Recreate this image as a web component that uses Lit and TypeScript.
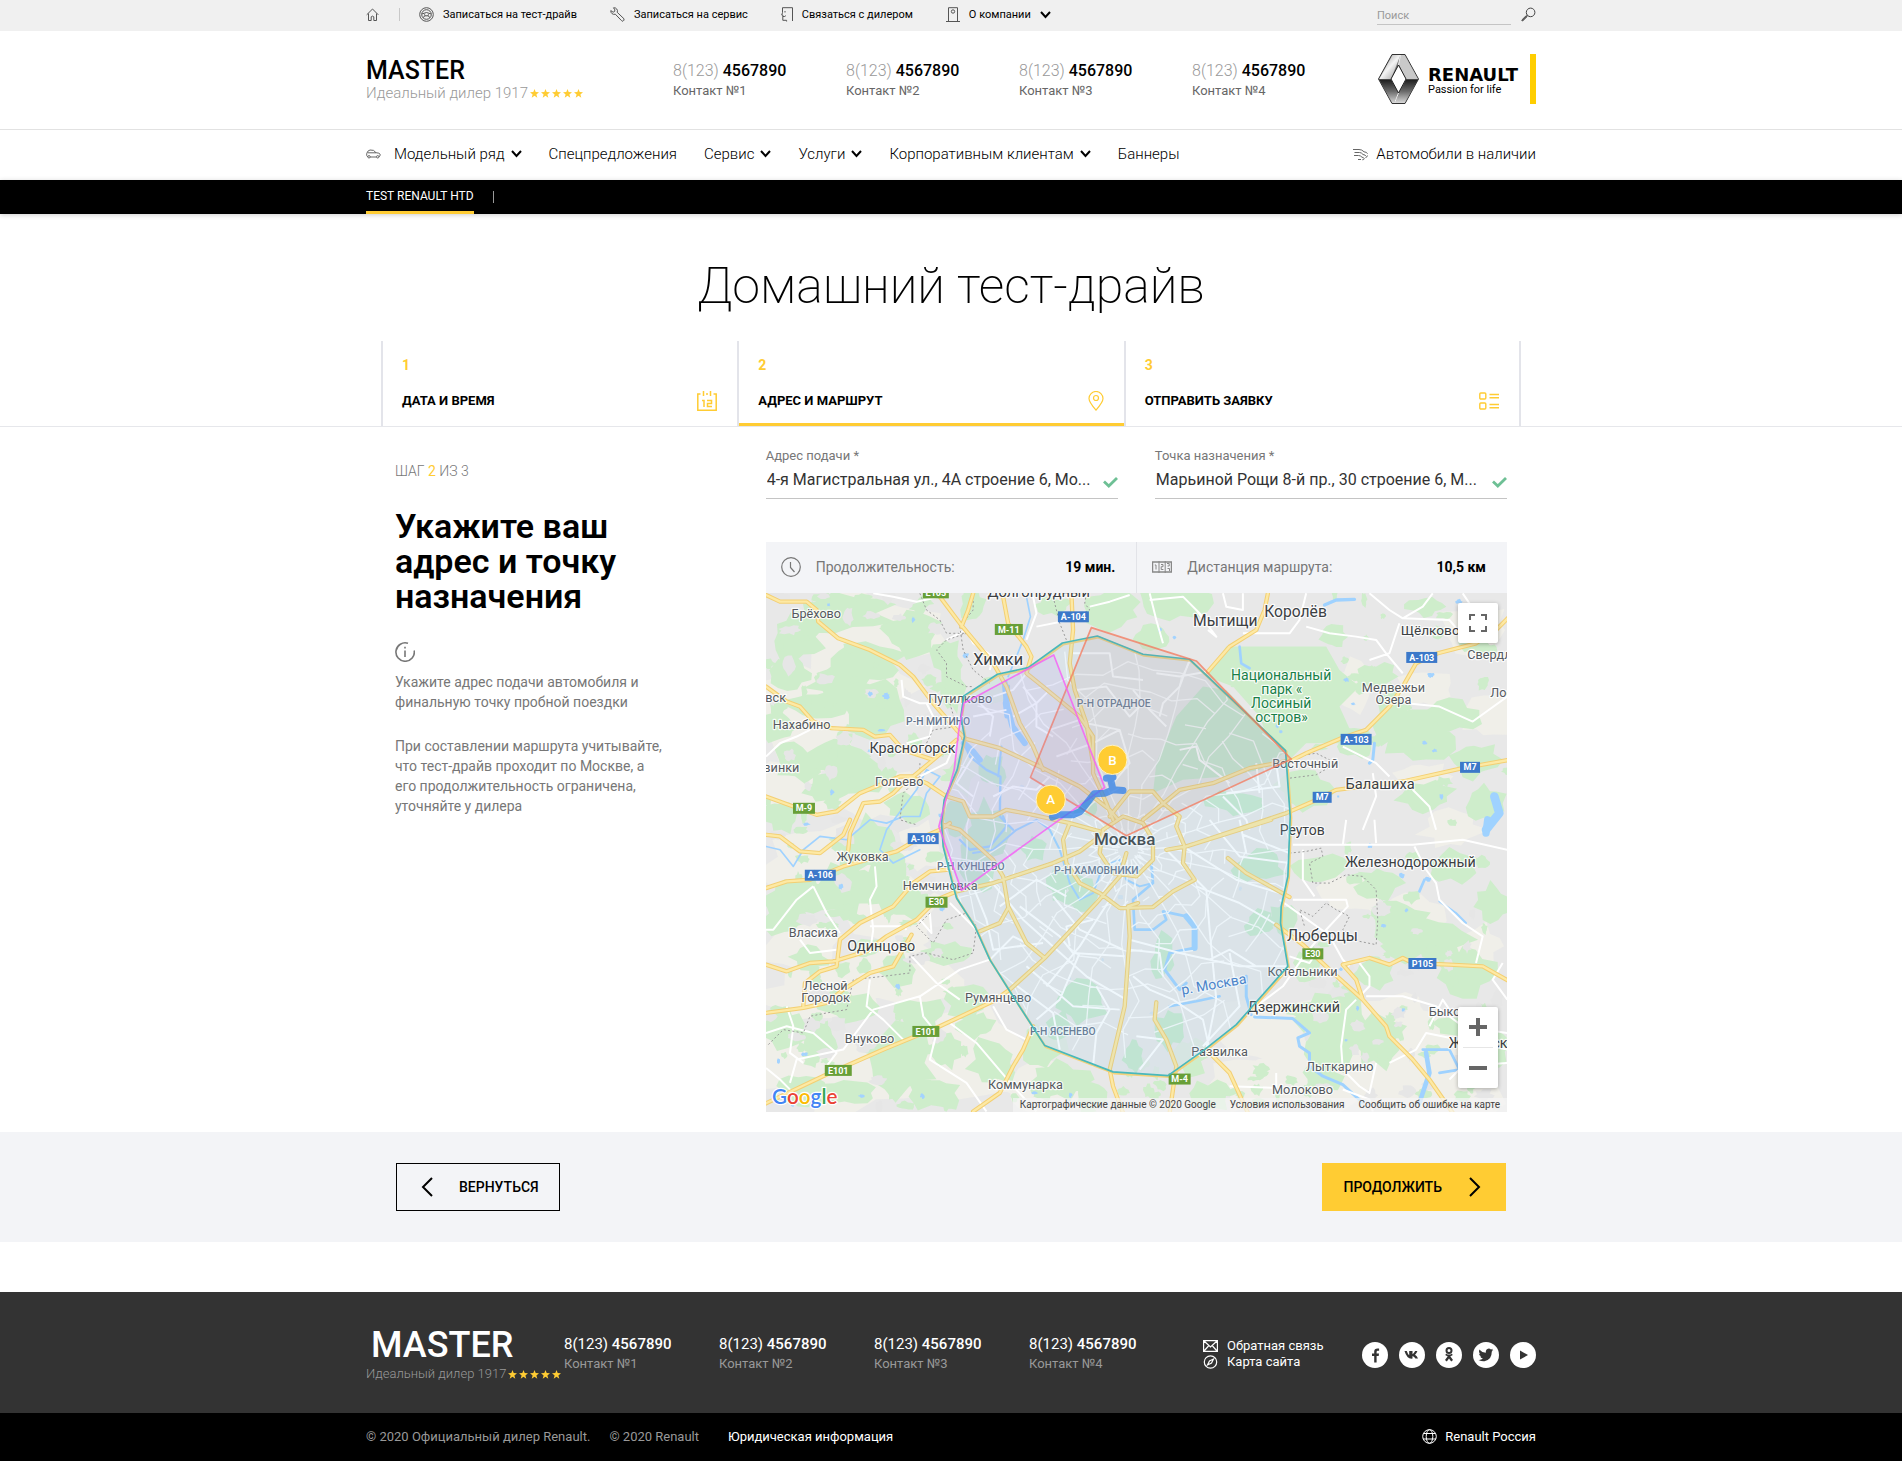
import { LitElement, html, svg, css } from "lit";
import { customElement } from "lit/decorators.js";

/* ---------- map data (units: one third of a CSS pixel) ---------- */

type P = [number, number];
const pts = (s: string, dx = 0, dy = 0): P[] =>
  s.trim().split(/\s+/).map((p) => {
    const [x, y] = p.split(",").map(Number);
    return [x + dx, y + dy] as P;
  });
const line = (p: P[]) => "M" + p.map((q) => q.join(" ")).join("L");
const E = 1110;
const S = 870;

function rng(seed: number) {
  let s = seed * 7919 + 17;
  return () => {
    s = (s * 1103515245 + 12345) % 2147483648;
    return s / 2147483648;
  };
}

/* jagged patch of land around a centre */
function patch(x: number, y: number, rx: number, ry: number): string {
  const r = rng(x + y * 3 + rx);
  const n = 15;
  let d = "";
  for (let i = 0; i < n; i++) {
    const a = (i / n) * Math.PI * 2;
    const k = 0.62 + r() * 0.55;
    d += (i ? "L" : "M") + Math.round(x + Math.cos(a) * rx * k) + " " + Math.round(y + Math.sin(a) * ry * k);
  }
  return d + "Z";
}
const patches = (list: number[][]) => list.map(([x, y, a, b]) => patch(x, y, a, b)).join("");

const scatter = (seed: number, n: number, x0: number, y0: number, w: number, h: number, lo: number, hi: number) => {
  const r = rng(seed);
  let d = "";
  for (let i = 0; i < n; i++) {
    const x = Math.round(x0 + r() * w);
    const y = Math.round(y0 + r() * h);
    d += patch(x, y, Math.round(lo + r() * (hi - lo)), Math.round(lo + r() * (hi - lo) * 0.8));
  }
  return d;
};

const sand = patches([
  [300, 300, 260, 120], [120, 560, 150, 200], [330, 470, 150, 140], [100, 780, 130, 90], [330, 800, 160, 90],
  [200, 1000, 210, 130], [400, 1150, 150, 110], [120, 1250, 130, 80], [420, 1350, 200, 100], [180, 1400, 190, 80],
  [620, 1560, 200, 150], [300, 1640, 240, 110], [850, 1680, 160, 80], [80, 1560, 110, 120], [480, 950, 80, 80],
  [1560, 1500, 180, 120], [1750, 1620, 230, 140], [1500, 1660, 170, 100], [2000, 1560, 150, 120], [2080, 1690, 200, 90],
  [1900, 1450, 110, 60], [2150, 300, 120, 80], [2000, 480, 100, 60], [2180, 560, 90, 70], [1780, 480, 80, 90],
  [2080, 900, 100, 60], [1770, 1090, 90, 70], [1950, 1150, 120, 60], [2150, 1250, 90, 70], [1990, 740, 90, 50],
]);

const woods = patches([
  [240, 250, 170, 60], [450, 310, 90, 70], [330, 400, 110, 60], [110, 320, 90, 80], [560, 380, 50, 60], [240, 460, 100, 60],
  [90, 430, 70, 50], [180, 520, 100, 40], [340, 540, 110, 90], [60, 590, 60, 50], [230, 680, 90, 60], [110, 700, 70, 60],
  [300, 740, 80, 60], [70, 860, 60, 50], [200, 780, 80, 50], [440, 830, 70, 50], [610, 730, 40, 70], [580, 470, 40, 90],
  [700, 480, 60, 40], [640, 230, 40, 50], [880, 230, 60, 30], [1060, 240, 90, 60], [1240, 220, 110, 60], [1180, 320, 60, 40],
  [330, 950, 110, 90], [120, 1090, 120, 60], [260, 1080, 90, 90], [380, 1050, 60, 110], [80, 1160, 80, 60], [440, 1110, 70, 60],
  [560, 1270, 90, 40], [410, 1320, 60, 50], [330, 1250, 60, 30], [150, 1290, 60, 40], [60, 1500, 80, 60], [260, 1430, 90, 50],
  [480, 1460, 80, 60], [620, 1420, 70, 60], [180, 1530, 60, 60], [420, 1600, 110, 110], [560, 1560, 50, 60], [520, 1690, 90, 60],
  [700, 1600, 80, 80], [260, 1690, 90, 40], [120, 1680, 70, 50], [840, 1560, 80, 70], [900, 1650, 90, 60], [1000, 1700, 60, 40],
  [650, 1490, 60, 40], [1290, 1580, 60, 60], [1350, 1700, 70, 50], [1720, 1500, 110, 130], [1850, 1530, 90, 90],
  [1690, 1640, 60, 50], [1620, 1440, 60, 30], [1920, 1180, 90, 70], [2010, 1230, 130, 80], [2120, 1330, 90, 70],
  [1860, 1060, 70, 50], [1690, 1020, 90, 50], [2080, 1010, 80, 50], [2200, 1120, 60, 60], [1970, 620, 120, 90],
  [2080, 560, 90, 50], [1900, 560, 60, 90], [2150, 690, 80, 60], [1790, 640, 60, 50], [2000, 800, 90, 50], [2180, 820, 60, 60],
  [1850, 440, 70, 40], [2000, 230, 60, 30], [2140, 330, 60, 50], [1720, 320, 40, 40], [1640, 780, 90, 60], [2110, 1490, 90, 40],
  [2200, 1550, 60, 60], [1840, 1330, 60, 50], [1640, 1310, 40, 50], [1470, 430, 60, 60],
]) + "M1340 440L1400 350L1560 350L1700 350L1740 420L1800 470L1740 530L1790 640L1640 640L1560 720L1500 560L1420 470Z";

const elkPark = "M1330 470L1400 480L1580 665L1500 720L1400 740L1270 750L1180 790L1190 700L1250 560Z";

const cityWoods = patches([
  [960, 1420, 80, 70], [900, 1490, 40, 50], [960, 1090, 50, 50], [680, 900, 70, 90], [650, 1000, 60, 90], [590, 860, 40, 60],
  [1430, 820, 90, 40], [1500, 1010, 80, 50], [1210, 1280, 40, 70], [1230, 1500, 50, 60], [900, 1060, 40, 60],
  [980, 830, 40, 30], [1500, 1180, 50, 40], [700, 720, 40, 50], [1120, 1580, 30, 50], [1570, 1170, 40, 60], [820, 960, 40, 40],
]) + elkPark;

const ponds = scatter(41, 55, 30, 200, 2200, 1530, 4, 11);
const greenBits = scatter(12, 110, 20, 190, 600, 1560, 8, 32) + scatter(27, 55, 1650, 190, 600, 1560, 8, 28) + scatter(8, 22, 700, 1600, 950, 140, 8, 28);
const greyBits = scatter(91, 50, 20, 190, 560, 1560, 10, 36) + scatter(92, 35, 1640, 1100, 600, 640, 8, 30);

const ring = pts(
  "1013,318 908,339 805,413 713,433 612,498 603,560 614,620 592,720 553,810 545,880 550,950 575,1050 590,1105 645,1190 690,1290 750,1385 855,1548 1060,1627 1225,1638 1335,1560 1430,1485 1585,1310 1563,1180 1565,1130 1585,1040 1592,860 1578,662 1290,388 1150,373",
);
const west = pts("882,375 612,520 597,600 583,720 555,820 537,890 605,1082 860,898 1035,773");
const north = pts("995,293 812,743 1100,918 1595,688 1310,393 1220,365");

const highways: P[][] = [
  pts("18,195 60,215 140,215 170,240 175,275 235,325 330,360 420,405 460,440 520,520 590,600 615,625"),
  pts("18,470 80,515 120,530 160,575 215,595 310,600 345,620 390,615 430,660 520,690 590,630"),
  pts("610,625 720,655 850,715 900,740 960,770 1050,840 1075,870"),
  pts("18,800 100,830 170,855 230,845 300,790 360,765 420,740 460,740 520,690"),
  pts("265,960 270,910 310,820 360,815 400,790 450,740 500,760 560,800 610,815 630,860 700,860 740,840 820,855 930,880 1020,905"),
  pts("540,200 600,280 700,400 740,470 780,580 820,650 850,720"),
  pts("730,200 745,280 800,350 815,380 800,430 850,470 960,560 1000,620 1000,730 1040,820 1060,870"),
  pts("640,190 625,240 605,290"),
  pts("935,190 940,300 930,400 945,480 980,580 1000,700"),
  pts("415,190 405,240 380,300 300,350 235,425", E),
  pts("1140,260 1100,300 1040,340 925,370 860,400 820,470 780,530 710,600 635,625 530,670 490,690 360,715 250,760 150,780 90,830 40,870", E),
  pts("1140,690 1000,715 820,755 620,780 550,815 470,850 320,900 170,950 110,960", E),
  pts("18,45 60,50 120,95 180,100 250,45 270,0", 0, S),
  pts("18,205 80,185 150,180 250,140 410,95 470,60 540,30 570,10", 0, S),
  pts("550,15 600,30 700,120 730,170 745,260 800,370 855,415", 0, S),
  pts("560,150 510,155 460,190 400,260 300,310 240,360 230,440 180,455 135,490 130,560", 0, S),
  pts("590,215 530,240 470,300 380,350 320,395 220,425 150,430 80,455 18,435", 0, S),
  pts("455,345 400,440 330,460 250,510 200,550 130,565 18,580", 0, S),
  pts("590,215 700,190 880,130 960,95 1020,50", 0, S),
  pts("10,855 200,765 370,690 540,620 700,545 750,510 855,415 1010,250 1080,170 1100,100", 0, S),
  pts("640,876 720,820 760,740 790,690 820,620", 0, S),
  pts("1135,250 1105,260 1110,350 1095,560 1050,750 1060,800 1090,880", 0, S),
  pts("660,335 720,310 745,265", 0, S),
  pts("295,115 350,160 480,232", E, S),
  pts("425,0 170,80", E, S),
  pts("440,315 520,375 600,450 700,540 770,620 780,650 850,720 900,780 970,880", E, S),
  pts("640,435 720,415 780,435 820,415 850,430 960,435 1060,440 1140,485", E, S),
  pts("640,435 680,480 700,540", E, S),
  pts("80,548 75,600 110,660 140,740 120,880", E, S),
  pts("230,690 300,760 355,880", E, S),
  pts("930,880 910,930 920,1000 960,1060 1020,1090 1080,1135 1180,1132 1240,1085 1305,1050 1270,1000 1275,950 1250,890 1260,860 1210,820 1180,785 1110,785 1050,860"),
  pts("1030,900 1020,970 1060,1030 1130,1040 1180,990 1180,930 1150,880 1090,860 1030,900"),
];

const roads: P[][] = [
  pts("340,190 400,200 470,215 540,200"), pts("820,200 830,250 800,330"), pts("830,290 930,270"), pts("990,230 1050,215 1110,195"),
  pts("18,680 60,640 110,620 150,600"), pts("425,450 430,500 480,520 520,520"), pts("440,640 510,620 520,560 500,520"),
  pts("590,630 560,700 480,740"), pts("620,300 640,340 700,380 690,420"), pts("560,330 620,300"), pts("700,500 760,480 800,430"),
  pts("660,520 700,560 690,620"), pts("640,560 740,540"), pts("790,470 830,520 830,590 880,620"), pts("760,560 830,520 870,480"),
  pts("700,800 760,770 830,780 870,740"), pts("940,370 1050,370 1060,440 1150,450"), pts("950,480 1040,470 1110,560 1150,520"),
  pts("980,580 1080,600 1110,700 1060,760"), pts("870,600 960,570"), pts("890,680 1000,640 1080,600"), pts("640,680 590,760 640,800"),
  pts("100,340 80,270 60,190", E), pts("60,210 160,200 230,270 200,240 260,320 235,300", E), pts("235,425 150,440 80,430", E),
  pts("280,190 290,230 340,240 340,190", E), pts("340,310 480,310 510,270 530,190", E), pts("530,290 600,310 680,320 740,330 770,370 820,430", E),
  pts("810,280 780,370 720,390", E), pts("720,190 780,240 820,265 880,230 910,190", E), pts("1000,190 1040,250 1040,300", E),
  pts("820,265 960,270 1020,340", E), pts("830,520 930,530 1030,575 1134,500", E), pts("640,650 700,680 740,700 780,740", E),
  pts("700,900 740,800 730,730", E), pts("850,780 900,830 920,900", E), pts("10,480 60,540 110,590", E), pts("180,390 150,470 100,520 90,560", E),
  pts("150,660 200,650 210,690 300,760", E), pts("280,800 350,870 360,900", E), pts("290,790 450,770 440,700", E), pts("380,700 390,790", E),
  pts("490,75 640,75 850,75 1000,60 1134,90", E, S), pts("640,75 650,0", E, S), pts("740,70 735,0", E, S), pts("855,80 890,150 920,190 930,240 1000,310 1060,350 1040,430", E, S),
  pts("490,240 650,240 655,260 590,330 530,400 460,500 380,560", E, S), pts("590,330 640,420 660,440", E, S), pts("450,240 520,290 590,340", E, S),
  pts("340,45 480,100", E, S), pts("520,90 520,180 555,230", E, S), pts("680,540 650,570 635,680 640,750 690,800 720,820 740,730", E, S),
  pts("710,530 820,530 920,560 1000,620 1134,640", E, S), pts("780,730 860,690 890,640 1134,690", E, S), pts("640,810 720,840 730,876", E, S),
  pts("300,800 440,805 440,760", E, S), pts("690,430 720,470 720,500 690,530", E, S), pts("1120,430 1090,480 1134,540", E, S),
  pts("960,780 1000,740 1134,730", E, S), pts("480,410 540,430 560,400", E, S), pts("900,620 940,540 960,570", E, S),
  pts("160,200 110,240 40,330 18,330", 0, S), pts("345,140 350,200 330,240 340,330 330,400", 0, S), pts("120,360 150,400 230,390", 0, S),
  pts("18,640 80,620 160,640 230,700 200,740", 0, S), pts("330,480 320,560 370,600 430,660", 0, S), pts("340,570 480,530 600,450 690,420", 0, S),
  pts("455,410 530,490 600,540", 0, S), pts("340,570 250,690 110,720 90,790", 0, S), pts("480,530 490,590 530,640 510,720 620,790 680,876", 0, S),
  pts("570,610 650,670 760,800 830,876", 0, S), pts("18,745 60,780 100,820", 0, S), pts("700,560 740,630 800,660", 0, S), pts("80,560 100,620 90,700 130,730", 0, S),
  pts("570,250 620,300 660,340", 0, S), pts("510,280 515,340 480,300", 0, S), pts("240,340 200,280 160,200", 0, S), pts("330,320 430,320 440,330", 0, S),
  pts("690,420 760,350 800,370", 0, S), pts("780,260 900,350 940,400 1095,410", 0, S), pts("690,180 790,300 980,470 1100,540", 0, S),
  pts("800,440 940,560 1080,570", 0, S), pts("640,200 680,300 700,390 850,370", 0, S), pts("880,230 960,330 1090,390", 0, S),
  pts("860,500 960,380 1050,240", 0, S), pts("830,600 900,540 960,400", 0, S), pts("1000,740 1010,640 1050,570 1010,500", 0, S),
  pts("760,490 880,580 900,690", 0, S), pts("720,260 830,180 920,230", 0, S), pts("930,380 920,320 1000,300", 0, S),
  pts("1110,390 1200,400 1210,470", 0, S), pts("110,90 230,210 240,330 260,540 230,690", E, S), pts("0,360 150,400 330,440 470,440", E, S),
  pts("20,650 100,660 30,750", E, S), pts("10,470 60,510 130,540 220,600 240,690", E, S), pts("200,200 330,250 450,320", E, S), pts("160,80 320,180 450,220", E, S),
  pts("300,400 330,560 220,680", E, S), pts("240,0 330,110 480,130", E, S), pts("240,420 300,390 380,440", E, S), pts("330,0 350,100", E, S),
];

/* city streets: spokes and rings around the centre */
const streets = (() => {
  const r = rng(5);
  const cx = 1105;
  const cy = 960;
  const out: string[] = [];
  const n = 24;
  for (let i = 0; i < n; i++) {
    const a = (i / n) * Math.PI * 2;
    let d = "";
    for (let k = 0; k < 8; k++) {
      const rad = 30 + k * 85;
      const b = a + (r() - 0.5) * 0.16;
      d += (k ? "L" : "M") + Math.round(cx + Math.cos(b) * rad) + " " + Math.round(cy + Math.sin(b) * rad);
    }
    out.push(d);
  }
  for (let q = 0; q < 9; q++) {
    let d = "";
    let pen = false;
    for (let i = 0; i <= 44; i++) {
      const a = (i / 44) * Math.PI * 2;
      const rad = 50 + q * 62 + (r() - 0.5) * 46;
      const p = Math.round(cx + Math.cos(a) * rad) + " " + Math.round(cy + Math.sin(a) * rad);
      if (r() < 0.2) pen = false;
      d += (pen ? "L" : "M") + p;
      pen = true;
    }
    out.push(d);
  }
  return out.join("");
})();

const rivers: [P[], number][] = [
  [pts("735,460 742,530 758,590 795,640"), 18],
  [pts("745,470 735,520 740,560"), 12],
  [pts("800,200 812,260 790,330 770,380 745,440"), 5],
  [pts("612,640 630,680 680,720 722,740 720,860 760,900"), 7],
  [pts("612,640 640,665 660,690"), 18],
  [pts("725,650 715,740"), 6],
  [pts("18,950 60,960 100,1010 130,960 180,920 260,930 330,870 380,880 430,860 480,860 500,790 540,740 500,720 470,780 380,900 360,960 400,1000 480,960"), 5],
  [pts("600,930 630,960 690,950 740,890 730,860"), 7],
  [pts("640,970 700,960 770,900 830,870 870,900 900,960 930,1060 960,1110 1000,1090 1030,1010 1080,990 1100,1050 1140,1070 1180,1060"), 6],
  [pts("65,130 70,190 10,240 15,330 70,330 110,300 100,275 170,290", E, S), 8],
  [pts("170,290 195,320 195,385", E, S), 18],
  [pts("195,385 120,400 105,450 150,510 170,490", E, S), 9],
  [pts("350,470 350,530 365,585", E, S), 9],
  [pts("375,592 490,597 540,640 505,655 510,680 540,700 540,740 580,770 640,795 700,850", E, S), 9],
  [pts("120,560 200,545 270,530", E, S), 8],
  [pts("930,245 980,280 1010,310", E, S), 6],
  [pts("880,690 960,690 990,750 930,760", E, S), 8],
  [pts("890,700 900,760 870,850", E, S), 14],
  [pts("1075,0 1070,40", E, S), 22],
  [pts("1095,800 1110,850 1070,900", E), 26],
  [pts("585,225 620,210 675,208", E), 10],
  [pts("330,350 335,400 360,415", E), 8],
  [pts("735,640 730,690 720,700", E), 9],
  [pts("885,180 870,215", E, S), 8],
];

const borders: P[][] = [
  pts("480,190 500,240 540,270 560,310 620,310 560,330 530,360 560,400 560,440 620,470 640,470"),
  pts("880,200 900,280 920,330"), pts("980,190 975,220 990,240 930,270"), pts("640,200 640,240 600,290 610,360 640,420 690,460"),
  pts("480,700 480,740 430,790 420,870 470,885"), pts("570,520 590,590 520,600 500,640"),
  pts("510,280 470,320 520,370 560,300 620,280 650,320 640,400 580,420 500,400 450,410 450,460 370,470 280,480 260,570 200,580 150,590 130,640 70,630 20,680", 0, S),
  pts("480,100 530,95 575,85 580,110 540,130 550,190 600,190 650,165 700,170 740,210 745,300 740,375 690,365 640,330 660,290 620,270 590,250 550,290 510,270 525,320", E, S),
  pts("480,700 500,680 560,670 620,700 560,735 480,745", E),
];

interface Label { x: number; y: number; t: string; s: number; c?: string; a?: string; w?: number; r?: number }
const INK = "#3c4043";
const MINOR = "#55595e";
const AREA = "#64748b";
const PARK = "#188048";
const town = (x: number, y: number, t: string, a = "middle"): Label => ({ x, y, t, s: 38, c: MINOR, a });
const city = (x: number, y: number, t: string, s = 43, a = "middle"): Label => ({ x, y, t, s, c: INK, a });
const area = (x: number, y: number, t: string): Label => ({ x, y, t, s: 31, c: AREA, w: 500 });
const park = (x: number, y: number, t: string): Label => ({ x, y, t, s: 42, c: PARK });

const labels: Label[] = [
  city(837, 200, "Долгопрудный", 44), town(169, 264, "Брёхово"), city(715, 405, "Химки", 49), town(78, 516, "овск", "end"),
  town(125, 598, "Нахабино"), town(601, 520, "Путилково"), area(535, 584, "Р-Н МИТИНО"), city(458, 669, "Красногорск"),
  town(118, 726, "винки", "end"), town(418, 769, "Гольево"), area(1062, 532, "Р-Н ОТРАДНОЕ"),
  city(E + 287, 287, "Мытищи", 47), city(E + 498, 260, "Королёв", 47), city(E + 814, 315, "Щёлково", 41, "start"),
  town(E + 1014, 388, "Свердл", "start"), town(E + 1083, 501, "Лос", "start"), town(E + 792, 486, "Медвежьи"), town(E + 792, 522, "Озера"),
  park(E + 455, 450, "Национальный"), park(E + 457, 492, "парк «"), park(E + 455, 534, "Лосиный"), park(E + 456, 576, "остров»"),
  town(E + 527, 714, "Восточный"), city(E + 752, 778, "Балашиха", 44),
  town(308, S + 123, "Жуковка"), area(633, S + 151, "Р-Н КУНЦЕВО"), town(541, S + 210, "Немчиновка"), town(160, S + 351, "Власиха"),
  city(364, S + 393, "Одинцово"), town(197, S + 510, "Лесной"), town(197, S + 546, "Городок"), town(715, S + 546, "Румянцево"),
  town(329, S + 669, "Внуково"), area(909, S + 646, "Р-Н ЯСЕНЕВО"), town(797, S + 808, "Коммунарка"), area(1010, S + 164, "Р-Н ХАМОВНИКИ"),
  { x: 1095, y: S + 75, t: "Москва", s: 51, c: INK, w: 500 },
  { x: E + 255, y: S + 508, t: "р. Москва", s: 42, c: "#3f78c4", r: -10 },
  city(E + 518, S + 46, "Реутов", 42), city(E + 843, S + 143, "Железнодорожный", 43), city(E + 579, S + 365, "Люберцы", 47),
  town(E + 519, S + 468, "Котельники"), city(E + 492, S + 577, "Дзержинский"), town(E + 898, S + 588, "Быко", "start"),
  city(E + 958, S + 684, "Жуковский", 43, "start"), town(E + 270, S + 708, "Развилка"), town(E + 631, S + 753, "Лыткарино"), town(E + 519, S + 822, "Молоково"),
];

const G = "#689f38";
const B = "#3b78c9";
const shields: [number, number, number, string, string][] = [
  [528, 188, 78, "E105", G], [747, 298, 84, "М-11", G], [941, 260, 93, "А-104", B], [132, 835, 66, "М-9", G],
  [E + 877, 382, 93, "А-103", B], [E + 680, 628, 93, "А-103", B], [E + 1022, 712, 60, "М7", B], [E + 578, 802, 57, "М7", B],
  [490, S + 56, 93, "А-106", B], [181, S + 166, 93, "А-106", B], [530, S + 247, 66, "E30", G], [498, S + 635, 81, "E101", G],
  [235, S + 752, 81, "E101", G], [E + 550, S + 402, 63, "E30", G], [E + 879, S + 431, 84, "Р105", B], [E + 150, S + 778, 66, "М-4", G],
];

@customElement("city-map")
class CityMap extends LitElement {
  static styles = css`
    :host { display: block; position: relative; font-family: Roboto, "Liberation Sans", sans-serif; }
    svg.canvas { display: block; width: 100%; height: auto; background: #e8e8e8; }
    .ctl { position: absolute; right: 9px; background: #fff; border-radius: 2px; box-shadow: 0 1px 4px rgba(0, 0, 0, 0.3); }
    .ctl.full { top: 10px; }
    .ctl.zoom { bottom: 24px; display: flex; flex-direction: column; }
    .ctl button { display: grid; place-items: center; width: 40px; height: 40px; padding: 0; border: 0; background: none; }
    .ctl hr { width: 30px; margin: 0 auto; border: 0; border-top: 1px solid #e6e6e6; }
    .terms { position: absolute; right: 0; bottom: 0; display: flex; height: 14px; background: rgba(245, 245, 245, 0.7); font-size: 10px; line-height: 14px; color: #444; white-space: nowrap; }
    .terms > * { padding: 0 7px; color: #444; text-decoration: none; }
  `;

  render() {
    const hw = highways.map(line).join("");
    const loop = line(ring) + "Z";
    return html`
      <svg class="canvas" viewBox="18 189 2226 1557" role="img" aria-label="Карта">
        <defs><clipPath id="inner"><path d=${loop}></path></clipPath></defs>
        <g>
          <path d=${sand} fill="#f0efe9"></path>
          <path d=${woods} fill="#ceedcb"></path>
          <path d=${greenBits} fill="#ceedcb"></path>
          <path d=${greyBits} fill="#e6e6e6"></path>
          <path d=${ponds} fill="#a3d3ff"></path>
          <path d=${loop} fill="#e8e8e8" opacity=".75"></path>
          <path d=${cityWoods} fill="#c9e9ce"></path>
        </g>
        <g fill="none" stroke="#9fd2ff" stroke-linejoin="round" stroke-linecap="round">
          ${rivers.map(([p, w]) => svg`<path d=${line(p)} stroke-width=${w}></path>`)}
        </g>
        <g fill="none" stroke="#fff" stroke-linejoin="round">
          <path d=${streets} stroke-width="4" clip-path="url(#inner)" opacity=".85"></path>
          <path d=${roads.map(line).join("")} stroke-width="6"></path>
        </g>
        <g fill="none" stroke="#9a9a9a" stroke-width="3" stroke-dasharray="6 7">
          <path d=${borders.map(line).join("")}></path>
        </g>
        <g fill="none" stroke-linejoin="round" stroke-linecap="round">
          <path d=${hw} stroke="#f3cf73" stroke-width="13"></path>
          <path d=${hw} stroke="#fde9a4" stroke-width="7"></path>
          <path d=${loop} stroke="#f3d27c" stroke-width="7" transform="translate(3 4)"></path>
        </g>
        <g font-family="Roboto, 'Liberation Sans', sans-serif" stroke="#fff" stroke-opacity=".85" stroke-width="7" stroke-linejoin="round" paint-order="stroke">
          ${labels.map((l) => svg`<text x=${l.x} y=${l.y} font-size=${l.s} fill=${l.c ?? INK} font-weight=${l.w ?? 400}
            text-anchor=${l.a ?? "middle"} transform=${l.r ? `rotate(${l.r} ${l.x} ${l.y})` : "rotate(0)"}>${l.t}</text>`)}
        </g>
        <g font-family="Roboto, 'Liberation Sans', sans-serif" font-size="27" font-weight="700" text-anchor="middle">
          ${shields.map(([x, y, w, t, c]) => svg`<rect x=${x - w / 2} y=${y - 16} width=${w} height="33" fill=${c}></rect><text x=${x} y=${y + 10} fill="#fff">${t}</text>`)}
        </g>
        <g stroke-linejoin="round" stroke-width="5">
          <path d=${loop} fill="#8fc8ea" fill-opacity=".14" stroke="#48b8bb"></path>
          <path d=${line(north) + "Z"} fill="#b98a8a" fill-opacity=".12" stroke="#f4775a" stroke-opacity=".75"></path>
          <path d=${line(west) + "Z"} fill="#b98af0" fill-opacity=".12" stroke="#f65cf6" stroke-opacity=".8"></path>
        </g>
        <g fill="none" stroke="#2a7de8" stroke-opacity=".72" stroke-width="21" stroke-linejoin="round" stroke-linecap="round">
          <path d="M878 862L895 855L940 855L962 845L1003 792L1035 790L1060 780L1090 782M1040 745L1060 742M1052 745L1060 780"></path>
        </g>
        <g font-family="Roboto, 'Liberation Sans', sans-serif" font-size="40" font-weight="500" text-anchor="middle">
          <circle cx="873" cy="810" r="44" fill="#fc3" stroke="#fff3c4" stroke-width="3"></circle>
          <text x="873" y="824" fill="#fff">A</text>
          <circle cx="1058" cy="690" r="44" fill="#fc3" stroke="#fff3c4" stroke-width="3"></circle>
          <text x="1058" y="704" fill="#fff">B</text>
        </g>
        <text x="36" y="1724" font-family="Lato, Roboto, sans-serif" font-size="62" stroke="#fff" stroke-width="7" paint-order="stroke" font-weight="600"
          ><tspan fill="#4285f4">G</tspan><tspan fill="#ea4335">o</tspan><tspan fill="#fbbc04">o</tspan><tspan fill="#4285f4">g</tspan><tspan fill="#34a853">l</tspan><tspan fill="#ea4335">e</tspan></text>
      </svg>
      <div class="ctl full">
        <button aria-label="Полный экран">
          <svg width="18" height="18" viewBox="0 0 18 18" fill="#666"><path d="M0 0h6v2H2v4H0zM12 0h6v6h-2V2h-4zM0 12h2v4h4v2H0zM16 12h2v6h-6v-2h4z"></path></svg>
        </button>
      </div>
      <div class="ctl zoom">
        <button aria-label="Увеличить"><svg width="18" height="18" fill="#666"><path d="M7 0h4v7h7v4h-7v7H7v-7H0V7h7z"></path></svg></button>
        <hr />
        <button aria-label="Уменьшить"><svg width="18" height="18" fill="#666"><path d="M0 7h18v4H0z"></path></svg></button>
      </div>
      <div class="terms">
        <span>Картографические данные © 2020 Google</span>
        <a href="#terms">Условия использования</a>
        <a href="#report">Сообщить об ошибке на карте</a>
      </div>
    `;
  }
}

/* ---------- icons ---------- */

const chevron = html`<svg class="chev" width="11" height="8" viewBox="0 0 11 8" fill="none" stroke="currentColor" stroke-width="2"><path d="M1 1l4.500 5L10 1"></path></svg>`;
const star = svg`<path d="M4.500 0l1.200 3.100 3.300.200-2.600 2.100.900 3.300-2.800-1.900-2.800 1.900.900-3.300L0 3.300l3.300-.200z"></path>`;
const stars = html`<svg class="stars" width="54" height="9" viewBox="0 0 54 9" fill="#fc3" role="img" aria-label="5 из 5">
  ${[0, 11, 22, 33, 44].map((x) => svg`<g transform="translate(${x} 0)">${star}</g>`)}
</svg>`;
const ico = {
  home: html`<svg width="13" height="13" viewBox="0 0 13 13" fill="none" stroke="#555"><path d="M.7 6.800L6.500 1l5.800 5.800M2.500 5.500v7h2.700V8.800q1.300-1.400 2.600 0v3.700h2.700v-7"></path></svg>`,
  wheel: html`<svg width="15" height="15" viewBox="0 0 15 15" fill="none" stroke="#555"><circle cx="7.500" cy="7.500" r="6.800"></circle><circle cx="7.500" cy="7.500" r="4.800"></circle><path d="M2.800 7q4.700-3 9.400 0M4 10.500l2-1.700h3l2 1.700M6 8.800l-.500-1.500M9 8.800l.500-1.500"></path></svg>`,
  wrench: html`<svg width="15" height="15" viewBox="0 0 15 15" fill="none" stroke="#555"><path d="M3.500.800a3.300 3.300 0 0 1 3.700 4.500l6.800 6.500q.400 1.600-1 2.400-.900.100-1.500-.600L5.300 7.200A3.400 3.400 0 0 1 .8 3.600l2.300 1.600 1.500-.700.300-1.600z"></path></svg>`,
  face: html`<svg width="12" height="15" viewBox="0 0 12 15" fill="none" stroke="#555"><path d="M11.500 14V.7h-10v5L.7 8h1.100v1.500h1.700M1.800 9.500v3.800h3.800v1.200M4 4v1.500M4.500 8.500l-1 1.500"></path></svg>`,
  door: html`<svg width="14" height="15" viewBox="0 0 14 15" fill="none" stroke="#555"><path d="M0 14.500h14M2.500 14V.7h9V14"></path><circle cx="7" cy="4.500" r="1.700"></circle></svg>`,
  search: html`<svg width="15" height="15" viewBox="0 0 15 15" fill="none" stroke="#444"><circle cx="9.600" cy="5.400" r="4.300"></circle><path d="M6.500 8.300l-5.300 5.200M5.500 8.300l-4.800 4.800.900.900L6.500 9.200"></path></svg>`,
  car: html`<svg width="15" height="10" viewBox="0 0 15 10" fill="none" stroke="#666"><path d="M4 8H10.500M1.800 8Q.3 7 .7 4.500 1.500 1.500 4 1q4-.6 6 2.700 3.500.2 4.200 1.600Q14.500 7 13 7.700"></path><circle cx="3" cy="7.800" r="1.200"></circle><circle cx="11.700" cy="7.800" r="1.200"></circle><path d="M1.500 3.800H10"></path></svg>`,
  fleet: html`<svg width="15" height="13" viewBox="0 0 15 13" fill="none" stroke="#666"><path d="M0 1.500h6q3 0 5 2.300 3 .2 3.500 2M1.500 4.500h5q2 0 3.500 2 2.500.3 3 1.700M1 7.500h4.500q2 0 3.500 1.700 2 .3 2.300 1.600-.3 1-2 1M5 11.500h3M12.500 9.500q2-.5 2-2"></path></svg>`,
  calendar: html`<svg width="20" height="20" viewBox="0 0 20 20" fill="none" stroke="#fc3" stroke-width="1.500"><path d="M3.500 3H.8v16.200h18.400V3h-2.700M6.500 0v5M13.500 0v5M9 3h2M5 9.500h2V16M10 9.500h4.500v3H10.500v3h4.500"></path></svg>`,
  pin: html`<svg width="16" height="20" viewBox="0 0 16 20" fill="none" stroke="#fc3" stroke-width="1.200"><path d="M8 19.200Q1 11 1 7.500a7 7 0 0 1 14 0Q15 11 8 19.200z"></path><circle cx="8" cy="7" r="2.500"></circle></svg>`,
  list: html`<svg width="20" height="18" viewBox="0 0 20 18" fill="none" stroke="#fc3" stroke-width="1.400"><rect x=".8" y="1" width="6" height="6" rx="1"></rect><rect x=".8" y="11" width="6" height="6" rx="1"></rect><path d="M10.500 2.500H20M10.500 5.800H20M10.500 12.500H20M10.500 15.800H20"></path></svg>`,
  info: html`<svg width="20" height="20" viewBox="0 0 20 20" fill="none" stroke="#777" stroke-width="1.600"><path d="M13 1.300A9.200 9.200 0 1 0 19.200 8.500M10 8.500V15M10 4.800V6.500"></path></svg>`,
  clock: html`<svg width="20" height="20" viewBox="0 0 20 20" fill="none" stroke="#777" stroke-width="1.200"><circle cx="10" cy="10" r="9.300"></circle><path d="M9.500 5v5.500l4 4.500"></path></svg>`,
  counter: html`<svg width="20" height="12" viewBox="0 0 20 12" fill="none" stroke="#888"><path d="M.5 1h19v10H.5z" stroke-width="1.500"></path><path d="M7 0v12M13.200 0v12M2.800 4h1.200v4.500M9 3.500h2v2.200H9.200V8.500h2.200M15 2.500h2.200v2.500H15.500M15.500 7.500h2V10"></path></svg>`,
  tick: html`<svg class="tick" width="15" height="11" viewBox="0 0 15 11" fill="none" stroke="#6ec095" stroke-width="2.800"><path d="M1 4.500l4.800 4.500L14 1"></path></svg>`,
  mail: html`<svg width="15" height="12" viewBox="0 0 15 12" fill="none" stroke="#fff" stroke-width="1.200"><path d="M.6.6h13.800v10.800H.6zM1 1l6.500 6L14 1M1 11l4.500-5M14 11L9.500 6"></path></svg>`,
  compass: html`<svg width="15" height="14" viewBox="0 0 15 14" fill="none" stroke="#fff" stroke-width="1.200"><circle cx="7.500" cy="7" r="6.200"></circle><path d="M10.500 4L8.500 8 4.500 10 6.500 6z"></path></svg>`,
  globe: html`<svg width="15" height="15" viewBox="0 0 15 15" fill="none" stroke="#fff"><circle cx="7.500" cy="7.500" r="6.800"></circle><ellipse cx="7.500" cy="7.500" rx="3.300" ry="6.800"></ellipse><path d="M1.800 4.500h11.400M1 10h13"></path></svg>`,
};

const emblem = html`<svg width="41" height="50" viewBox="0 0 41 50" aria-hidden="true">
  <defs>
    <linearGradient id="up" x1="0" y1="0" x2="1" y2="1"><stop offset="0" stop-color="#8a8a8a"></stop><stop offset=".5" stop-color="#f4f4f4"></stop><stop offset="1" stop-color="#8f8f8f"></stop></linearGradient>
    <linearGradient id="dn" x1="0" y1="0" x2="0" y2="1"><stop offset="0" stop-color="#1c1c1c"></stop><stop offset=".5" stop-color="#6a6a6a"></stop><stop offset="1" stop-color="#d9d9d9"></stop></linearGradient>
  </defs>
  <path d="M14 .5h13L40.500 25 27 49.500H14L.5 25z" fill="#777" stroke="#333"></path>
  <path d="M14.500 1h8L13 25H1.200z" fill="url(#up)"></path>
  <path d="M22.500 1h4.200L40 25H28L20.500 10z" fill="#c9c9c9"></path>
  <path d="M1.200 25.500H13L20.500 39 16 49h-1.700z" fill="url(#dn)"></path>
  <path d="M28 25.500h12L26.700 49H16.500z" fill="url(#dn)"></path>
  <path d="M20.500 11L28 25l-7.500 14L13 25z" fill="#fff" stroke="#222" stroke-width="1"></path>
  <path d="M22.500 1l-2 10M16.500 49l4-10" stroke="#eee" stroke-width="1"></path>
</svg>`;

const socials = [
  { n: "Facebook", g: svg`<path d="M14.600 20.500V14h2.100l.300-2.500h-2.400V10q0-1.200 1.200-1.200h1.300V6.600q-4.900-.800-4.900 3V11.500H10V14h2.200v6.500z"></path>` },
  { n: "ВКонтакте", g: svg`<path d="M5.500 9h2.300q.9 3 2.400 4.200V9h3.300v3.300q1.200-.4 2.600-3.300h2.300q-.7 2.300-2.400 3.700 2 1.100 3 3.900h-2.600q-1-2-2.900-2.600v2.600Q8 17.500 5.500 9z"></path>` },
  { n: "Одноклассники", g: svg`<path fill-rule="evenodd" d="M13 5a3.500 3.500 0 1 1 0 7 3.500 3.500 0 0 1 0-7zm0 2a1.500 1.500 0 1 0 0 3 1.500 1.500 0 0 0 0-3zM9.200 13l1-1.300q2.800 1.800 5.600 0l1 1.300q-1.200 1-2.500 1.300l2.700 3.700-1.800 1.500L13 16.600l-2.200 2.900L9 18l2.700-3.700Q10.400 14 9.200 13z"></path>` },
  { n: "Twitter", g: svg`<path d="M6.300 7.500q2.700 3.200 6.500 3.300-.3-3.800 3-4.200 1.200 0 2.200.9l2-.8-1.200 1.700 1.500-.4-1.500 1.600q0 8.500-7.300 9.600-3.200.2-6-1.300 2.700.2 4.400-1.300-2.200-.3-2.800-2h1.200q-2.200-.8-2.400-3l1.300.3q-2-1.800-.9-4.400z"></path>` },
  { n: "YouTube", g: svg`<path d="M10 8.500l8 4.500-8 4.500z"></path>` },
];

const phones = [1, 2, 3, 4];

@customElement("app-root")
class AppRoot extends LitElement {
  static styles = css`
    :host { display: block; background: #fff; color: #000; font-family: Roboto, "Liberation Sans", sans-serif; font-size: 15px; }
    * { box-sizing: border-box; }
    a { color: inherit; text-decoration: none; }
    h1, h2, p { margin: 0; }
    svg { flex: none; }
    .wrap { display: flex; align-items: center; max-width: 1170px; margin: 0 auto; }

    .util { background: #f0f0f0; font-size: 11px; }
    .util .wrap { height: 31px; padding-bottom: 2px; }
    .util nav { display: flex; align-items: center; flex: 1; gap: 33px; }
    .util nav a { display: flex; align-items: center; gap: 9px; }
    .util .home { padding-right: 20px; margin-right: -14px; border-right: 1px solid #c8c8c8; }
    .search { display: flex; align-items: center; gap: 10px; }
    .search input { width: 134px; height: 19px; margin-top: 2px; padding: 0; border: 0; border-bottom: 1px solid #c4c4c4; background: none; font: inherit; }
    .search input::placeholder { color: #999; opacity: 1; }
    .search button { display: grid; padding: 0; border: 0; background: none; }

    .head .wrap { display: grid; grid-template-columns: 307fr repeat(4, 173fr) 171fr; height: 98px; }
    .name { font-size: 25px; line-height: 26px; font-weight: 500; }
    .tag { display: flex; align-items: center; gap: 2px; color: #999; line-height: 18px; font-weight: 300; white-space: nowrap; }
    .phone { display: block; font-size: 16px; line-height: 22px; font-weight: 300; color: #999; white-space: nowrap; }
    .phone b { font-weight: 500; color: #000; }
    .contact { font-size: 13px; line-height: 18px; color: #666; }
    .brand { display: flex; align-items: center; gap: 9px; height: 50px; margin: -2px 0 0 13px; border-right: 6px solid #ffce00; }
    .brand .word { display: grid; margin-top: 4px; }
    .brand strong { font: 700 18px/17px "DejaVu Sans", sans-serif; }
    .brand small { font-size: 11px; line-height: 13px; }

    .menu { border-top: 1px solid #e2e2e2; font-weight: 300; }
    .menu .wrap { height: 50px; padding-bottom: 2px; gap: 27px; }
    .menu a { display: flex; align-items: center; gap: 6px; white-space: nowrap; }
    .menu .models svg:first-child { margin-right: 7px; }
    .menu .stock { margin-left: auto; gap: 8px; }

    .strip { background: #000; box-shadow: 0 1px 5px rgba(0, 0, 0, 0.2); color: #fff; font-size: 12px; }
    .strip .wrap { height: 34px; align-items: stretch; }
    .strip a { border-bottom: 3px solid #fc3; line-height: 33px; }
    .strip i { width: 1px; height: 12px; margin: 11px 19px; background: #999; }

    h1 { padding: 41px 0 24px; font-size: 50px; line-height: 62px; font-weight: 200; text-align: center; }

    .steps { border-bottom: 1px solid #e6e7eb; }
    .steps ol { display: grid; grid-template-columns: 357fr 387fr 396fr; max-width: 1140px; margin: 0 auto; padding: 0; list-style: none; border-right: 2px solid #e3e4ea; }
    .steps li { display: grid; grid-template-columns: 1fr auto; align-content: start; row-gap: 16px; height: 85px; padding: 14px 20px 0 19px; border-left: 2px solid #e3e4ea; font-size: 13px; line-height: 20px; font-weight: 700; text-transform: uppercase; }
    .steps li.on { box-shadow: inset 0 -3px #fc3; }
    .steps em { grid-column: 1 / -1; font-style: normal; font-size: 14px; color: #fc3; }
    .steps svg { align-self: center; }

    main { display: grid; grid-template-columns: 1fr 2fr; max-width: 1112px; margin: 0 auto; padding-bottom: 20px; }
    .side { padding: 34px 100px 0 0; color: #777; font-size: 14px; line-height: 20px; }
    .stepno { font-weight: 300; }
    .stepno b { font-weight: 400; color: #fc3; }
    h2 { margin: 28px 0; font-size: 34px; line-height: 35px; font-weight: 600; color: #000; white-space: nowrap; }
    .side svg { display: block; margin-bottom: 10px; }
    .side p + p { margin-top: 24px; }

    .fields { display: grid; grid-template-columns: 1fr 1fr; gap: 37px; padding: 19px 0 43px; }
    .field { display: grid; grid-template-columns: 1fr auto; align-items: center; border-bottom: 1px solid #c4c4c4; }
    .field label { grid-column: 1 / -1; font-size: 13px; line-height: 20px; color: #777; }
    .field input { min-width: 0; height: 32px; padding: 0 1px 5px; border: 0; background: none; font: inherit; font-size: 16px; color: #333; }
    .facts { display: grid; grid-template-columns: 1fr 1fr; background: #f3f4f7; }
    .fact { display: flex; align-items: center; height: 51px; padding: 0 21px 1px 15px; gap: 15px; font-size: 14px; color: #777; }
    .fact + .fact { border-left: 1px solid #e2e3e8; }
    .fact b { margin-left: auto; font-size: 14px; font-weight: 700; color: #000; }

    .actions { background: #f3f4f7; }
    .actions div { display: flex; justify-content: space-between; max-width: 1110px; margin: 0 auto; padding: 31px 0; }
    .actions button { display: flex; align-items: center; height: 48px; padding: 0 20px; border: 1px solid #000; background: none; font: 500 14px/20px Roboto, sans-serif; text-transform: uppercase; color: #000; }
    .actions .back { gap: 26px; padding-left: 24px; }
    .actions .next { gap: 27px; padding-right: 24px; border-color: #fc3; background: #fc3; }

    footer { margin-top: 50px; background: #333; color: #fff; }
    .foot { display: grid; grid-template-columns: 198fr repeat(4, 155fr) 19fr 142fr 191fr; height: 121px; padding-top: 4px; }
    .foot .name { padding-left: 5px; font-size: 36px; line-height: 40px; }
    .foot .tag { font-size: 13px; }
    .foot .phone { color: #fff; font-size: 15px; line-height: 20px; font-weight: 400; }
    .foot .phone b { color: #fff; }
    .foot .contact { color: #999; line-height: 20px; }
    .foot .links { grid-column: 7; display: grid; font-size: 13px; line-height: 16px; }
    .foot .links a { display: flex; align-items: center; gap: 9px; white-space: nowrap; }
    .social { display: flex; justify-content: flex-end; gap: 11px; padding-top: 2px; }
    .social svg { display: block; }
    .legal { background: #000; font-size: 13px; }
    .legal .wrap { height: 48px; color: #999; }
    .legal a { color: #fff; }
    .legal .law { margin-left: 29px; }
    .legal .copy { margin-left: 19px; }
    .legal .site { display: flex; align-items: center; gap: 8px; margin-left: auto; }
  `;

  private phone(n: number) {
    return html`<div><a class="phone" href="tel:81234567890">8(123) <b>4567890</b></a><div class="contact">Контакт №${n}</div></div>`;
  }

  private arrow(d: string) {
    return html`<svg width="12" height="20" viewBox="0 0 12 20" fill="none" stroke="#000" stroke-width="2"><path d=${d}></path></svg>`;
  }

  render() {
    return html`
      <header>
        <div class="util">
          <div class="wrap">
            <nav aria-label="Сервисное меню">
              <a class="home" href="#home" aria-label="Главная">${ico.home}</a>
              <a href="#drive">${ico.wheel}Записаться на тест-драйв</a>
              <a href="#service">${ico.wrench}Записаться на сервис</a>
              <a href="#dealer">${ico.face}Связаться с дилером</a>
              <a href="#about">${ico.door}О компании ${chevron}</a>
            </nav>
            <form class="search" @submit=${(e: Event) => e.preventDefault()}>
              <input type="text" placeholder="Поиск" aria-label="Поиск" />
              <button aria-label="Найти">${ico.search}</button>
            </form>
          </div>
        </div>
        <div class="head">
          <div class="wrap">
            <div>
              <div class="name">MASTER</div>
              <div class="tag">Идеальный дилер 1917 ${stars}</div>
            </div>
            ${phones.map((n) => this.phone(n))}
            <a class="brand" href="#brand">${emblem}<span class="word"><strong>RENAULT</strong><small>Passion for life</small></span></a>
          </div>
        </div>
        <div class="menu">
          <nav class="wrap" aria-label="Основное меню">
            <a class="models" href="#models">${ico.car}Модельный ряд ${chevron}</a>
            <a href="#offers">Спецпредложения</a>
            <a href="#care">Сервис ${chevron}</a>
            <a href="#extras">Услуги ${chevron}</a>
            <a href="#corporate">Корпоративным клиентам ${chevron}</a>
            <a href="#banners">Баннеры</a>
            <a class="stock" href="#stock">${ico.fleet}Автомобили в наличии</a>
          </nav>
        </div>
        <div class="strip"><div class="wrap"><a href="#htd">TEST RENAULT HTD</a><i></i></div></div>
      </header>

      <h1>Домашний тест-драйв</h1>
      <div class="steps">
        <ol>
          <li><em>1</em>Дата и время${ico.calendar}</li>
          <li class="on"><em>2</em>Адрес и маршрут${ico.pin}</li>
          <li><em>3</em>Отправить заявку${ico.list}</li>
        </ol>
      </div>

      <main>
        <section class="side">
          <p class="stepno">ШАГ <b>2</b> ИЗ 3</p>
          <h2>Укажите ваш<br />адрес и точку<br />назначения</h2>
          ${ico.info}
          <p>Укажите адрес подачи автомобиля и финальную точку пробной поездки</p>
          <p>При составлении маршрута учитывайте, что тест-драйв проходит по Москве, а его продолжительность ограничена, уточняйте у дилера</p>
        </section>
        <section>
          <div class="fields">
            <div class="field">
              <label for="from">Адрес подачи *</label>
              <input id="from" type="text" value="4-я Магистральная ул., 4А строение 6, Мо..." />${ico.tick}
            </div>
            <div class="field">
              <label for="to">Точка назначения *</label>
              <input id="to" type="text" value="Марьиной Рощи 8-й пр., 30 строение 6, М..." />${ico.tick}
            </div>
          </div>
          <div class="facts">
            <div class="fact">${ico.clock}Продолжительность:<b>19 мин.</b></div>
            <div class="fact">${ico.counter}Дистанция маршрута:<b>10,5 км</b></div>
          </div>
          <city-map></city-map>
        </section>
      </main>

      <div class="actions">
        <div>
          <button class="back">${this.arrow("M11 1L2 10l9 9")}Вернуться</button>
          <button class="next">Продолжить${this.arrow("M1 1l9 9-9 9")}</button>
        </div>
      </div>

      <footer>
        <div class="wrap foot">
          <div>
            <div class="name">MASTER</div>
            <div class="tag">Идеальный дилер 1917 ${stars}</div>
          </div>
          ${phones.map((n) => this.phone(n))}
          <div class="links">
            <a href="#feedback">${ico.mail}Обратная связь</a>
            <a href="#sitemap">${ico.compass}Карта сайта</a>
          </div>
          <div class="social">
            ${socials.map((s) => html`<a href="#social" aria-label=${s.n}><svg width="26" height="26" viewBox="0 0 26 26" fill="#333"><circle cx="13" cy="13" r="13" fill="#fff"></circle>${s.g}</svg></a>`)}
          </div>
        </div>
        <div class="legal">
          <div class="wrap">
            <span>© 2020 Официальный дилер Renault.</span>
            <span class="copy">© 2020 Renault</span>
            <a class="law" href="#legal">Юридическая информация</a>
            <a class="site" href="#ru">${ico.globe}Renault Россия</a>
          </div>
        </div>
      </footer>
    `;
  }
}
